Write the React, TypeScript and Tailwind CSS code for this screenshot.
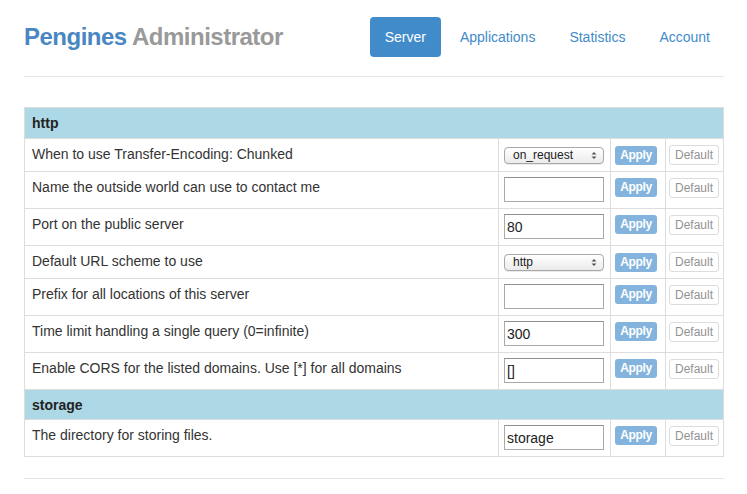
import React from "react";

interface Setting {
  label: string;
  kind: "select" | "text";
  value: string;
}

interface Section {
  name: string;
  settings: Setting[];
}

const sections: Section[] = [
  {
    name: "http",
    settings: [
      { label: "When to use Transfer-Encoding: Chunked", kind: "select", value: "on_request" },
      { label: "Name the outside world can use to contact me", kind: "text", value: "" },
      { label: "Port on the public server", kind: "text", value: "80" },
      { label: "Default URL scheme to use", kind: "select", value: "http" },
      { label: "Prefix for all locations of this server", kind: "text", value: "" },
      { label: "Time limit handling a single query (0=infinite)", kind: "text", value: "300" },
      { label: "Enable CORS for the listed domains. Use [*] for all domains", kind: "text", value: "[]" },
    ],
  },
  {
    name: "storage",
    settings: [{ label: "The directory for storing files.", kind: "text", value: "storage" }],
  },
];

const navItems = ["Server", "Applications", "Statistics", "Account"];

// mac-style popup button, drawn instead of a native select
const SelectBox: React.FC<{ value: string }> = ({ value }) => (
  <div className="flex items-center justify-between w-[100px] h-[17px] rounded-[4px] border border-[#a8a8a8] bg-gradient-to-b from-white to-[#ebebeb] pl-[8px] pr-[6px] shadow-[0_1px_0_rgba(0,0,0,0.08)]">
    <span className="text-[12px] leading-[15px] text-[#222]">{value}</span>
    <svg width="6" height="9" viewBox="0 0 6 9">
      <path d="M0.5 3.5 L3 1 L5.5 3.5 Z" fill="#555" />
      <path d="M0.5 5.5 L3 8 L5.5 5.5 Z" fill="#555" />
    </svg>
  </div>
);

const SettingRow: React.FC<{ setting: Setting }> = ({ setting }) => {
  const isSelect = setting.kind === "select";
  const cell = isSelect ? "items-center" : "items-start pt-[6px]";
  return (
    <div
      className={`grid grid-cols-[473px_112px_55px_60px] border-b border-[#dddddd] ${
        isSelect ? "h-[33px]" : "h-[37px]"
      }`}
    >
      <div className="pl-[7px] pt-[5px] text-[14px] leading-[20px] text-[#333]">
        {setting.label}
      </div>
      <div className={`flex border-l border-[#dddddd] pl-[5px] ${isSelect ? "items-center" : "items-start pt-[5px]"}`}>
        {isSelect ? (
          <SelectBox value={setting.value} />
        ) : (
          <input
            type="text"
            defaultValue={setting.value}
            className="w-[100px] h-[25px] border border-[#aaaaaa] border-t-[#8f8f8f] bg-white px-[2px] text-[14px] text-[#222] outline-none"
          />
        )}
      </div>
      <div className={`flex border-l border-[#dddddd] pl-[4px] ${cell}`}>
        <button className="w-[42px] h-[19px] rounded-[3px] bg-[#84b4dd] text-[12px] font-bold tracking-[-0.4px] text-white leading-[19px]">
          Apply
        </button>
      </div>
      <div className={`flex border-l border-[#dddddd] pl-[3px] ${cell}`}>
        <button className="w-[50px] h-[20px] rounded-[3px] border border-[#dcdcdc] bg-white text-[12px] text-[#929292] leading-[18px]">
          Default
        </button>
      </div>
    </div>
  );
};

const App: React.FC = () => {
  return (
    <div className="w-[747px] h-[494px] bg-white font-['Liberation_Sans',Arial,sans-serif]">
      <div className="ml-[24px] w-[700px] pt-[17px]">
        <div className="flex items-center justify-between h-[40px]">
          <h3 className="text-[24px] font-bold tracking-[-0.5px] leading-[40px]">
            <span className="text-[#4a87c2]">Pengines</span>{" "}
            <span className="text-[#999]">Administrator</span>
          </h3>
          <nav className="flex gap-[4px] -mr-[1px]">
            {navItems.map((item, i) => (
              <a
                key={item}
                className={`block h-[40px] px-[15px] rounded-[4px] text-[14px] leading-[40px] ${
                  i === 0 ? "bg-[#428bca] text-white" : "text-[#428bca]"
                }`}
              >
                {item}
              </a>
            ))}
          </nav>
        </div>
        <div className="mt-[19px] border-t border-[#e5e5e5]" />

        <div className="mt-[30px] border border-b-0 border-[#dddddd]">
          {sections.map((section) => (
            <div key={section.name}>
              <div
                className={`bg-[#add8e6] border-b border-[#dddddd] pl-[7px] pt-[5px] text-[14px] leading-[20px] font-bold text-[#222] ${
                  section.name === "http" ? "h-[31px]" : "h-[30px]"
                }`}
              >
                {section.name}
              </div>
              {section.settings.map((s) => (
                <SettingRow key={s.label} setting={s} />
              ))}
            </div>
          ))}
        </div>

        <div className="mt-[21px] border-t border-[#e5e5e5]" />
      </div>
    </div>
  );
};

export default App;
